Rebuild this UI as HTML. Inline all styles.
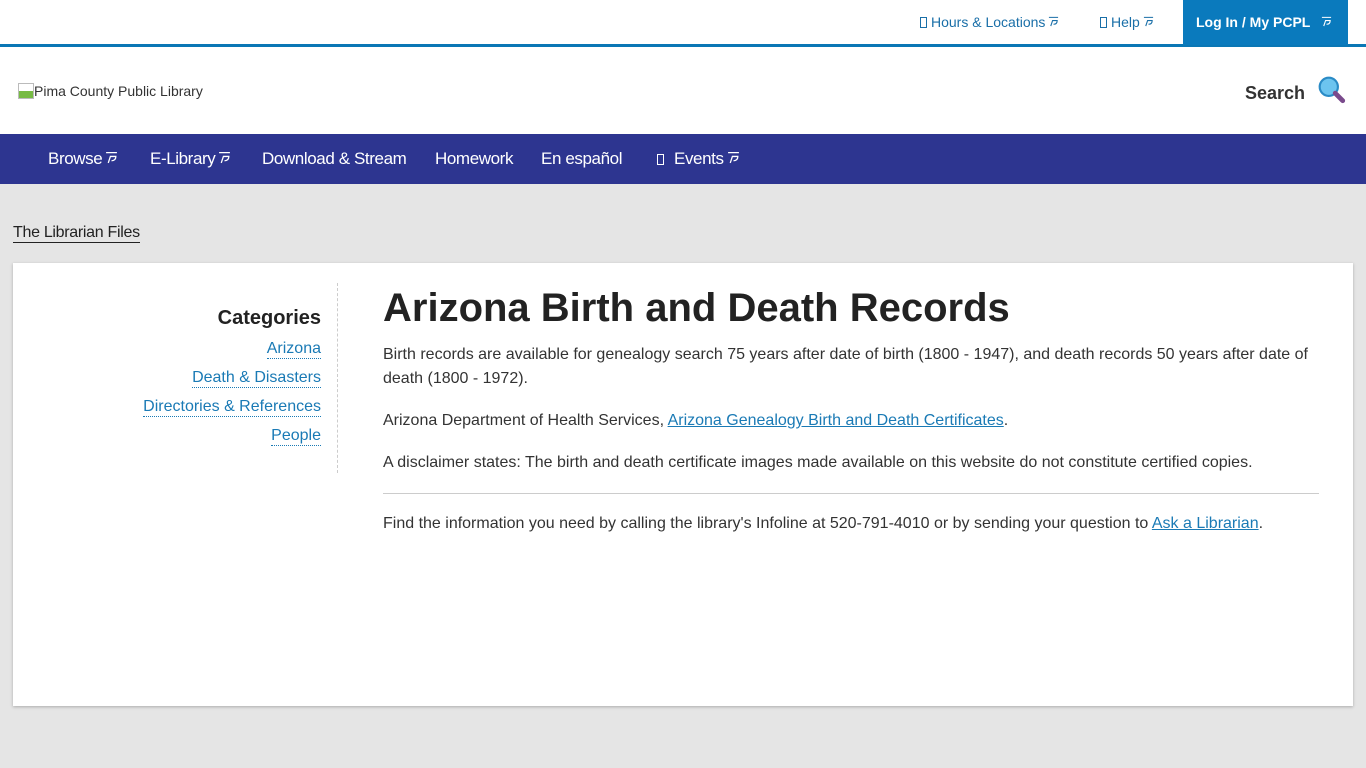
<!DOCTYPE html>
<html><head><meta charset="utf-8"><style>
*{margin:0;padding:0;box-sizing:border-box}
body{width:1366px;height:768px;background:#e5e5e5;font-family:"Liberation Sans",Arial,sans-serif;color:#333;overflow:hidden;position:relative}
.top{position:absolute;left:0;top:0;width:1366px;height:47px;background:#fff;border-bottom:3px solid #0a77b5}
.top a{position:absolute;top:14px;font-size:14px;line-height:16px;color:#1a6fa8;text-decoration:none}
.login{position:absolute;left:1183px;top:0;width:165px;height:45px;background:#0a7abd;color:#fff;font-weight:bold;font-size:14px;line-height:16px;padding:14px 0 0 13px}
.hdr{position:absolute;top:47px;left:0;width:1366px;height:87px;background:#fff}
.logo{position:absolute;left:18px;top:36px;font-size:14px;color:#333}
.logo i{display:inline-block;width:16px;height:16px;border:1px solid #bbb;background:linear-gradient(#fff 50%,#7b4 50%);vertical-align:-3px}
.search{position:absolute;left:1245px;top:28px;font-size:18px;line-height:28px;font-weight:bold;color:#333}
.nav{position:absolute;top:134px;left:0;width:1366px;height:50px;background:#2d3590}
.nav .n{position:absolute;top:15px;color:#fff;font-size:17px;line-height:19px;letter-spacing:-0.4px;white-space:nowrap}
.ext{display:inline-block;vertical-align:0;margin-left:3px}
.bc{position:absolute;left:13px;top:223px;font-size:16px;color:#222;border-bottom:1px solid #222;line-height:19px;letter-spacing:-0.3px}
.card{position:absolute;left:13px;top:263px;width:1340px;height:443px;background:#fff;box-shadow:0 1px 3px rgba(0,0,0,.25)}
.side{position:absolute;left:0;top:20px;width:325px;height:190px;border-right:1px dashed #ccc;text-align:right;padding-right:16px}
.side h3{font-size:20px;color:#222;margin-top:23px;line-height:24px}
.side a{display:inline-block;color:#1a7ab5;font-size:16px;text-decoration:none;border-bottom:1px dotted #1a7ab5;line-height:19px;margin-top:9px}
.main{position:absolute;left:370px;top:22px;width:936px;font-size:16px;line-height:24px}
.main h1{font-size:40px;color:#222;line-height:46px;margin-bottom:12px}
.main p{margin-bottom:18px}
.main a{color:#1a7ab5;text-decoration:underline}
hr{border:0;border-top:1px solid #ccc;margin:0 0 18px}
.box{display:inline-block;width:7px;height:11px;border:1px solid currentColor;vertical-align:-1px;margin-right:4px}
</style></head><body>
<svg width="0" height="0" style="position:absolute"><defs><symbol id="e" viewBox="0 0 12 12"><path d="M1 1.5H11M3 11L5 5H10Q10 9 6 9" fill="none" stroke="currentColor" stroke-width="1.2"/></symbol></defs></svg>
<div class="top">
<a style="left:920px"><span class="box"></span>Hours &amp; Locations<svg class="ext" width="11" height="11"><use href="#e"/></svg></a>
<a style="left:1100px"><span class="box"></span>Help<svg class="ext" width="11" height="11"><use href="#e"/></svg></a>
</div>
<div class="login">Log In / My PCPL &nbsp;<svg class="ext" width="11" height="11"><use href="#e"/></svg></div>
<div class="hdr">
<div class="logo"><i></i>Pima County Public Library</div>
<div class="search">Search<svg width="30" height="30" viewBox="0 0 28 28" style="vertical-align:-6px;margin-left:12px"><circle cx="11" cy="11" r="8.5" fill="#6cc4ef" stroke="#2a8bc6" stroke-width="2"/><line x1="17" y1="17" x2="24" y2="24" stroke="#7a4a8c" stroke-width="4.5" stroke-linecap="round"/></svg></div>
</div>
<div class="nav">
<span class="n" style="left:48px">Browse<svg class="ext" width="13" height="13"><use href="#e"/></svg></span>
<span class="n" style="left:150px">E-Library<svg class="ext" width="13" height="13"><use href="#e"/></svg></span>
<span class="n" style="left:262px">Download &amp; Stream</span>
<span class="n" style="left:435px">Homework</span>
<span class="n" style="left:541px">En español</span>
<span class="n" style="left:657px"><span class="box" style="margin-right:10px"></span>Events<svg class="ext" width="13" height="13"><use href="#e"/></svg></span>
</div>
<div class="bc">The Librarian Files</div>
<div class="card">
<div class="side"><h3>Categories</h3>
<a>Arizona</a><br><a>Death &amp; Disasters</a><br><a>Directories &amp; References</a><br><a>People</a></div>
<div class="main">
<h1>Arizona Birth and Death Records</h1>
<p>Birth records are available for genealogy search 75 years after date of birth (1800 - 1947), and death records 50 years after date of death (1800 - 1972).</p>
<p>Arizona Department of Health Services, <a>Arizona Genealogy Birth and Death Certificates</a>.</p>
<p>A disclaimer states: The birth and death certificate images made available on this website do not constitute certified copies.</p>
<hr>
<p>Find the information you need by calling the library's Infoline at 520-791-4010 or by sending your question to <a>Ask a Librarian</a>.</p>
</div></div>
</body></html>
